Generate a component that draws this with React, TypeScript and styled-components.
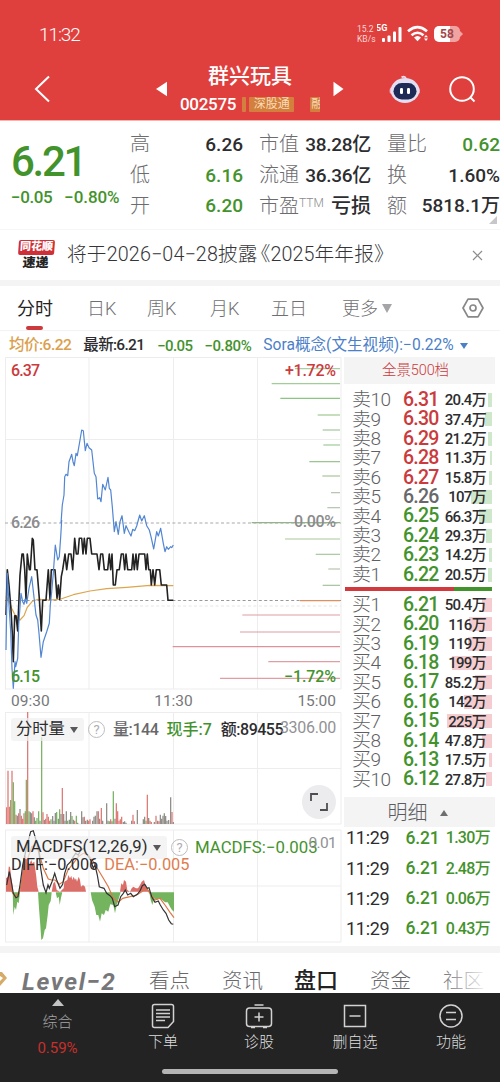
import React from "react";
import styled, { createGlobalStyle } from "styled-components";

const GREEN = "#43932d";
const RED = "#cb3a3c";
const INK = "#2d2d2f";
const MUTE = "#8b8b8d";

const Global = createGlobalStyle`
  * { box-sizing: border-box; }
  body { margin: 0; background: #fff; font-family: Roboto, "Noto Sans CJK SC", sans-serif; color: ${INK}; }
`;

interface TxtProps { $s: number; $w?: number; $c?: string; $ls?: number; $ml?: number }
const Txt = styled.span<TxtProps>`
  font-size: ${(p) => p.$s}px;
  font-weight: ${(p) => p.$w ?? 400};
  color: ${(p) => p.$c ?? INK};
  letter-spacing: ${(p) => p.$ls ?? 0}px;
  margin-left: ${(p) => p.$ml ?? 0}px;
  line-height: 1;
  white-space: nowrap;
`;

const Page = styled.div`width: 500px; height: 1082px; overflow: hidden; display: flex; flex-direction: column;`;

/* Header */
const Header = styled.header`height: 121px; background: #df403e; border-bottom: 1px solid #f7b4ae; flex: none;`;
const Status = styled.div`height: 58px; padding: 10px 38px 0 39px; display: flex; align-items: center; justify-content: space-between;`;
const StatusRight = styled.div`display: flex; align-items: center; height: 20px;`;
const Rate = styled.div`display: flex; flex-direction: column; gap: 2px; width: 20px;`;
const Battery = styled.div`
  width: 26px; height: 16px; border-radius: 5px; margin-left: 3px; margin-right: 2px; position: relative;
  background: linear-gradient(90deg, #fff 60%, #f0a3a1 60%);
  display: flex; align-items: center; justify-content: center;
  &::after { content: ""; position: absolute; left: 26px; top: 5px; border-left: 3px solid #f0a3a1; border-top: 3px solid transparent; border-bottom: 3px solid transparent; }
`;
const TitleBar = styled.div`height: 62px; display: grid; grid-template-columns: 154px 195px 151px; align-items: center;`;
const BackCell = styled.div`padding: 0 0 1px 34px; display: flex;`;
const TitleCell = styled.div`display: grid; grid-template-columns: 26px 140px 1fr; align-items: center; height: 62px;`;
const TitleText = styled.div`display: flex; flex-direction: column; align-items: center; padding-top: 1px;`;
const CodeRow = styled.div`display: flex; align-items: center; width: 140px; height: 17px; margin-top: 9px; overflow: hidden;`;
const Tag = styled.span<{ $w: number; $ml: number }>`
  width: ${(p) => p.$w}px; margin-left: ${(p) => p.$ml}px; height: 15px; flex: none; background: #d3803f; color: #f8dcb4;
  font-size: 12px; line-height: 15px; text-align: center; overflow: hidden; white-space: nowrap; border-radius: 1px;
`;
const HeadIcons = styled.div`display: flex; align-items: center; padding: 0 0 0 39px; gap: 26px;`;

/* Quote summary */
const Quote = styled.section`height: 108px; flex: none; display: grid; grid-template-columns: 130px 113px 128px 129px; padding-top: 8px;`;
const Last = styled.div`padding: 12px 0 0 11px; display: flex; flex-direction: column;`;
const LastChange = styled.div`display: flex; gap: 12px; margin-top: 6px;`;
const Stats = styled.div<{ $pl: number }>`padding-left: ${(p) => p.$pl}px; display: flex; flex-direction: column; position: relative;`;
const Stat = styled.div`height: 30.7px; display: flex; align-items: center; justify-content: space-between; white-space: nowrap;`;
const Sup = styled.sup`font-size: 12px; font-weight: 300; color: ${MUTE}; vertical-align: 6px; line-height: 0;`;
const Corner = styled.i`position: absolute; right: 3px; bottom: 5px; border-left: 8px solid transparent; border-bottom: 8px solid #c7c7c9;`;

/* News strip */
const News = styled.section`height: 51px; flex: none; border-top: 1px solid #f6f6f6; display: flex; align-items: center; padding: 0 16px 0 17px;`;
const Brand = styled.div`width: 38px; display: flex; flex-direction: column; align-items: center; transform: skewX(-4deg);`;
const BrandTop = styled.span`width: 36px; height: 15px; background: #cf3038; border-radius: 2px; color: #fff; font-size: 11px; font-weight: 900; line-height: 14px; text-align: center;`;
const BrandBottom = styled.span`font-size: 13px; font-weight: 900; line-height: 15px; color: #242424;`;
const NewsText = styled.div`flex: 1; padding-left: 12px; white-space: nowrap;`;
const Gap = styled.div<{ $h: number }>`height: ${(p) => p.$h}px; background: #f4f4f4; flex: none;`;

/* Chart tabs */
const Tabs = styled.nav`height: 45px; flex: none; display: flex; padding: 0 16px 0 17px; align-items: center; border-bottom: 1px solid #f3f3f3;`;
const Tab = styled.span<{ $on?: boolean; $w: number }>`
  width: ${(p) => p.$w}px; height: 44px; line-height: 45px; font-size: 18px; white-space: nowrap; position: relative;
  font-weight: ${(p) => (p.$on ? 400 : 300)}; color: ${(p) => (p.$on ? "#232325" : "#6f6f72")};
  ${(p) => p.$on && `&::after { content: ""; position: absolute; left: 9px; bottom: 0; width: 17px; height: 4px; border-radius: 2px; background: ${RED}; }`}
`;
const Caret = styled.i<{ $c: string; $s: number; $up?: boolean; $h?: number }>`
  display: inline-block; flex: none; border-left: ${(p) => p.$s}px solid transparent; border-right: ${(p) => p.$s}px solid transparent;
  ${(p) => (p.$up ? "border-bottom" : "border-top")}: ${(p) => p.$h ?? p.$s * 1.5}px solid ${(p) => p.$c};
`;
const Push = styled.div<{ $ml?: number }>`margin-left: ${(p) => (p.$ml ? `${p.$ml}px` : "auto")}; display: flex;`;
const Info = styled.div`height: 26px; flex: none; display: flex; align-items: center; padding: 4px 0 0 9px;`;

/* Market body */
const Body = styled.main`height: 589px; flex: none; display: grid; grid-template-columns: 344px 151px;`;
const Charts = styled.div`display: flex; flex-direction: column;`;
const Times = styled.div`height: 22px; display: grid; grid-template-columns: 1fr 1fr 1fr; align-items: center; padding: 2px 8px 0 11px;
  & > :nth-child(2) { text-align: center; } & > :nth-child(3) { text-align: right; }`;
const SubPanel = styled.div`height: 117px; position: relative;`;
const Over = styled.div<{ $t: number }>`position: absolute; left: 11px; right: 0; top: ${(p) => p.$t}px; height: 23px; display: flex; align-items: center;`;
const Picker = styled.div<{ $w: number }>`width: ${(p) => p.$w}px; height: 23px; background: rgba(240,240,240,.72); border-radius: 3px; display: flex; align-items: center; justify-content: space-between; padding: 0 6px 0 5px; flex: none;`;
const Help = styled.span`width: 17px; height: 17px; border: 1.3px solid #bdbdbf; border-radius: 50%; color: #adadaf; font-size: 13px; line-height: 15px; text-align: center; flex: none; margin-left: 4px;`;
const AxisMax = styled.div<{ $t: number }>`position: absolute; right: 8px; top: ${(p) => p.$t}px; display: flex;`;
const Expand = styled.div`position: absolute; left: 302px; top: 73px; width: 34px; height: 34px; border-radius: 50%; background: #ececee; display: flex; align-items: center; justify-content: center;`;

const Book = styled.aside`display: flex; flex-direction: column;`;
const BookTop = styled.div`height: 27px; background: #f4f4f5; display: flex; align-items: center; justify-content: center; margin-bottom: 6px; flex: none; padding: 2px 8px 0 0;`;
const Level = styled.div`height: 19.4px; flex: none; display: grid; grid-template-columns: 51px 43px 40px; padding-left: 8px; align-items: center; position: relative;`;
const Depth = styled.i`position: absolute; right: 3px; top: 3px; height: 14px;`;
const Vol = styled.div`position: relative; line-height: 1; display: flex; justify-content: flex-end; align-items: center; padding-top: 2px;`;
const Ratio = styled.div`height: 4px; margin: 3px 3px 4px 1px; background: linear-gradient(90deg, #d2393d 74%, #43932d 74%); flex: none;`;
const DetailHead = styled.div`height: 30px; margin-top: 8px; background: #f4f4f5; display: flex; align-items: center; justify-content: center; gap: 12px; flex: none; padding: 3px 4px 0 0;`;
const Trade = styled.div`height: 30.2px; flex: none; display: flex; align-items: center; justify-content: space-between; padding: 0 5px 7px 2px;`;

/* Lower tabs and nav */
const Lower = styled.div`height: 40px; flex: none; display: flex; padding-top: 14px; position: relative; overflow: hidden;`;
const LowTab = styled.span<{ $w: number; $on?: boolean }>`
  width: ${(p) => p.$w}px; flex: none; line-height: 28px; white-space: nowrap;
  font-size: ${(p) => (p.$on ? 22 : 20.5)}px; font-weight: ${(p) => (p.$on ? 500 : 300)}; color: ${(p) => (p.$on ? "#222" : "#69696c")};
`;
const LevelTwo = styled.span`width: 128px; flex: none; font: italic 700 24.5px/29px Roboto, sans-serif; letter-spacing: 1.6px; color: #77777a; padding-left: 1px;`;
const Fade = styled.i`position: absolute; right: 0; top: 0; width: 62px; height: 40px; background: linear-gradient(90deg, rgba(255,255,255,0), #fff 85%);`;
const Nav = styled.footer`height: 89px; flex: none; background: #232323; display: flex; flex-direction: column; align-items: center;`;
const NavGrid = styled.div`height: 76px; width: 500px; display: grid; grid-template-columns: 115px repeat(4, 96px);`;
const NavItem = styled.div`display: flex; flex-direction: column; align-items: center; padding-top: 9px; gap: 5px;`;
const IndexItem = styled.div`display: flex; flex-direction: column; align-items: center; padding-top: 6px;
  & > :nth-child(2) { margin-top: 9px; } & > :nth-child(3) { margin-top: 11px; }`;
const HomeBar = styled.div`width: 176px; height: 5px; border-radius: 3px; background: #b4b4b4;`;

const line = (pts: number[][], y0: number) => pts.map(([x, y]) => `${(x / 3).toFixed(1)},${(y0 + y / 3).toFixed(1)}`).join(" ");

const blueA = [[18,555],[22,325],[27,420],[32,500],[36,610],[40,670],[45,590],[47,605],[53,580],[56,480],[63,385],[68,410],[72,418],[75,402],[80,415],[87,370],[95,335],[103,405],[108,450],[113,465],[117,505],[123,577],[130,530],[140,500],[148,475],[151,420],[155,380],[160,325],[166,240],[173,285],[178,275],[182,215],[185,165]];
const blueB = [[183,505],[187,450],[192,420],[194,365],[198,358],[203,362],[207,320],[215,298],[219,320],[223,332],[228,295],[232,302],[240,255],[245,225],[250,227],[256,287],[261,265],[267,278],[275,285],[283,355],[288,365],[293,432],[299,428],[303,440],[308,388],[316,405],[324,367],[328,400],[332,405],[337,455],[343,530],[348,500],[355,538],[360,500],[366,482],[373,535],[378,512],[388,533],[393,543],[398,523],[404,527],[410,513],[419,480],[425,498],[433,482],[440,512],[448,525],[453,545],[461,582],[470,530],[475,543],[482,520],[490,565],[495,590],[500,575],[505,583],[512,575],[515,578],[520,570]];
const black = [[18,285],[22,149],[27,195],[33,270],[37,340],[40,425],[44,287],[48,287],[53,333],[57,235],[60,165],[66,102],[70,102],[74,149],[78,238],[82,102],[88,149],[91,149],[97,55],[100,60],[105,149],[111,149],[118,235],[124,333],[128,241],[138,241],[145,149],[150,238],[154,149],[165,149],[171,235],[175,195],[179,238],[184,170],[188,149],[195,102],[200,149],[206,102],[213,102],[218,149],[224,55],[229,102],[234,102],[238,55],[245,55],[249,102],[253,55],[258,102],[262,55],[270,55],[275,102],[291,102],[297,149],[302,102],[308,102],[313,149],[323,149],[328,102],[332,149],[336,102],[340,195],[346,195],[351,149],[358,149],[364,102],[370,102],[374,149],[378,102],[383,149],[395,149],[399,102],[403,149],[408,102],[412,149],[417,102],[434,102],[438,149],[442,102],[446,149],[451,149],[454,195],[459,149],[464,195],[469,149],[479,149],[484,195],[500,195],[504,241],[520,241]];
const avg = [[18,230],[28,245],[35,265],[45,285],[60,300],[72,287],[82,262],[97,244],[115,238],[150,240],[180,238],[220,224],[270,213],[320,206],[380,202],[450,196],[520,197]];
const bars: [number, number, string][] = [[41,375,"#a9cfa0"],[86,305,"#9fcf97"],[130,331,"#8cc484"],[180,443,"#9bca93"],[225,458,"#a5c79d"],[270,460,"#9fcb97"],[320,418,"#94c28c"],[363,457,"#abc59c"],[413,483,"#b3c3ae"],[458,472,"#b3c3ae"],[503,245,"#93b38b"],[552,345,"#a7c998"],[598,437,"#a7c79f"],[642,475,"#b4c6ae"],[691,458,"#a3c39c"],[737,390,"#e0905f"],[780,217,"#df9ea3"],[831,210,"#df9ea3"],[875,8,"#dd9298"],[920,295,"#df9ea3"],[970,150,"#df9ea3"]];

const Grid = ({ ys }: { ys: number[] }) => (
  <g stroke="#ededee" strokeWidth="1">
    {[5.5, 89, 173.5, 257.5, 341].map((x) => <line key={x} x1={x} x2={x} y1={ys[0]} y2={ys[ys.length - 1]} />)}
    {ys.map((y) => <line key={y} x1="5" x2="341" y1={y} y2={y} />)}
  </g>
);

const Svg = styled.svg`display: block;`;

const PriceChart = () => (
  <Svg width="343" height="333" viewBox="0 357 343 333" fontFamily="Roboto" fontSize="16" fontWeight="500">
    <Grid ys={[357.5, 439.5, 689]} />
    <g strokeDasharray="3 2.4">
      <line x1="5" x2="341" y1="523" y2="523" stroke="#a8a8aa" />
      <line x1="5" x2="341" y1="600.5" y2="600.5" stroke="#98989c" />
      <line x1="5" x2="341" y1="606" y2="606" stroke="#e5e5e7" />
    </g>
    {bars.map(([y, x, c]) => <line key={y} x1={170 + x / 3} x2="340" y1={355 + y / 3} y2={355 + y / 3} stroke={c} strokeWidth="1.2" />)}
    <g fill="none" strokeLinejoin="round">
      <polyline points={line(avg, 520)} stroke="#dca64e" strokeWidth="1.2" />
      <polyline points={line(black, 520)} stroke="#222" strokeWidth="1.6" />
      <polyline points={line(blueA, 465)} stroke="#5286d3" strokeWidth="1.2" />
      <polyline points={line(blueB, 355)} stroke="#5286d3" strokeWidth="1.2" />
    </g>
    <text x="11" y="376" fill={RED} textLength="29">6.37</text>
    <text x="11" y="527.5" fill={MUTE} textLength="29">6.26</text>
    <text x="11" y="682" fill={GREEN} textLength="29">6.15</text>
    <text x="285" y="376" fill={RED} textLength="51">+1.72%</text>
    <text x="294" y="527" fill={MUTE} textLength="42">0.00%</text>
    <text x="284" y="682" fill={GREEN} textLength="52">−1.72%</text>
  </Svg>
);

const R = "#dd7772", G = "#78b262", K = "#8d8b86";
/* Minute volumes: x, height, colour, in thirds of a pixel */
const vols: [number, number, string][] = [
[20,50,R],[24,160,R],[28,52,R],[32,72,G],[36,160,R],[40,125,G],[44,68,G],[48,28,R],[52,25,K],[56,32,R],[60,45,K],[64,25,R],[68,16,R],[72,32,R],[76,38,G],[79,133,G],[83,340,R],[87,38,G],[91,35,K],[95,32,K],[99,38,R],[103,20,K],[107,10,G],[111,18,G],[116,38,G],[120,10,K],[125,260,G],[129,35,R],[133,12,K],[137,16,R],[141,30,R],[145,22,R],[149,10,R],[153,14,G],[158,24,K],[162,10,K],[166,33,K],[170,36,G],[175,16,K],[179,44,G],[183,30,K],[187,108,R],[191,30,K],[195,10,K],[199,38,K],[203,10,G],[208,13,K],[212,36,K],[216,24,G],[220,13,K],[224,10,R],[229,25,G],[233,4,K],[245,38,K],[249,20,K],[253,22,R],[257,10,K],[262,13,K],[266,10,R],[270,14,R],[278,10,K],[282,22,K],[286,25,K],[291,38,K],[295,38,R],[299,16,K],[304,48,R],[308,10,K],[320,62,K],[324,10,K],[328,8,G],[332,14,R],[336,8,K],[340,98,G],[345,16,K],[349,62,R],[353,38,R],[357,10,R],[361,14,R],[365,22,R],[370,6,K],[374,8,K],[378,4,K],[395,10,K],[399,28,R],[403,8,R],[412,42,K],[430,14,K],[434,22,K],[438,10,G],[442,88,R],[446,18,K],[450,10,R],[454,6,R],[463,6,K],[468,25,R],[473,10,K],[477,8,R],[481,28,K],[485,16,K],[489,25,K],[493,32,K],[497,24,K],[501,10,K],[506,12,K],[512,80,K],[516,36,R],[520,6,K]];
const VolumeChart = () => (
  <Svg width="343" height="117" viewBox="0 712 343 117">
    <Grid ys={[712.5, 768.5, 824]} />
    {vols.map(([x, h, c]) => <line key={x} x1={x / 3} x2={x / 3} y1={824 - h / 3} y2="824" stroke={c} strokeWidth="1.25" />)}
  </Svg>
);

const macdUp = [[18,200],[18,160],[24,155],[26,125],[30,125],[33,150],[38,185],[40,200],[60,200],[64,160],[70,115],[74,90],[78,95],[82,110],[88,118],[94,105],[97,115],[103,110],[109,155],[112,185],[116,200],[155,200],[160,175],[165,170],[170,195],[180,200],[191,190],[193,170],[202,165],[205,150],[210,160],[214,152],[217,165],[221,155],[225,165],[228,160],[231,170],[236,155],[240,165],[243,185],[249,180],[255,185],[258,200],[360,200],[364,175],[369,180],[372,165],[378,170],[382,195],[390,200],[395,190],[400,185],[408,190],[414,190],[420,180],[425,170],[432,165],[438,185],[445,195],[450,200]];
const macdDown = [[38,202],[40,270],[44,245],[48,255],[52,230],[56,235],[60,202],[114,202],[117,250],[121,300],[124,345],[129,340],[134,315],[138,310],[143,270],[146,240],[152,228],[155,202],[167,202],[171,220],[176,215],[179,240],[183,218],[187,202],[272,202],[276,225],[284,245],[289,270],[295,270],[300,290],[305,265],[312,270],[317,255],[325,260],[331,238],[340,240],[345,265],[350,240],[355,225],[362,202],[448,202],[452,225],[457,240],[463,220],[470,225],[478,220],[487,225],[495,232],[503,232],[510,245],[516,255],[522,260],[522,202]];
const diff = [[20,180],[28,140],[33,165],[40,205],[48,218],[54,215],[60,180],[68,120],[80,65],[92,20],[100,17],[108,45],[116,75],[122,130],[130,180],[138,203],[144,180],[148,190],[156,170],[164,145],[170,165],[180,190],[188,178],[194,145],[202,120],[212,110],[220,95],[227,85],[235,90],[242,75],[252,70],[262,90],[272,105],[280,130],[285,120],[292,150],[298,185],[305,188],[312,190],[320,205],[330,212],[337,220],[344,245],[354,240],[362,215],[370,205],[376,195],[383,210],[392,205],[400,215],[412,208],[420,198],[427,182],[434,178],[442,190],[447,188],[455,215],[465,232],[475,228],[481,240],[490,255],[498,265],[506,285],[514,296],[520,298]];
const dea = [[20,175],[30,190],[45,215],[56,205],[68,170],[80,110],[95,65],[106,60],[118,85],[130,130],[145,162],[155,165],[165,165],[178,178],[190,170],[204,135],[220,115],[235,95],[250,85],[265,90],[280,110],[295,135],[310,160],[325,185],[340,220],[355,232],[368,220],[390,215],[410,210],[425,200],[440,190],[450,205],[465,225],[480,220],[495,240],[510,262],[522,278]];
const MacdChart = () => (
  <Svg width="343" height="117" viewBox="0 829 343 117">
    <Grid ys={[830, 886, 942]} />
    <polygon points={line(macdUp, 825)} fill="#db6e69" />
    <polygon points={line(macdDown, 825)} fill="#74b45e" />
    <g fill="none" strokeWidth="1.2">
      <polyline points={line(dea, 825)} stroke="#dc7848" />
      <polyline points={line(diff, 825)} stroke="#333" />
    </g>
  </Svg>
);

const sells: [number, string, string][] = [[10,"6.31","20.4"],[9,"6.30","37.4"],[8,"6.29","21.2"],[7,"6.28","11.3"],[6,"6.27","15.8"],[5,"6.26","107"],[4,"6.25","66.3"],[3,"6.24","29.3"],[2,"6.23","14.2"],[1,"6.22","20.5"]];
const buys: [number, string, string][] = [[1,"6.21","50.4"],[2,"6.20","116"],[3,"6.19","119"],[4,"6.18","199"],[5,"6.17","85.2"],[6,"6.16","142"],[7,"6.15","225"],[8,"6.14","47.8"],[9,"6.13","17.5"],[10,"6.12","27.8"]];

const BookRow = ({ side, n, price, vol }: { side: string; n: number; price: string; vol: string }) => (
  <Level>
    <Depth style={{ width: Math.max(2, Number(vol) * 0.2), background: side === "卖" ? "#cfe8cb" : "#f5cdd1" }} />
    <Txt $s={19} $w={300} $c="#606063" $ls={-0.5}>{side}{n}</Txt>
    <Txt $s={19.5} $w={500} $ls={-0.8} $c={+price > 6.26 ? RED : +price < 6.26 ? GREEN : "#68686b"}>{price}</Txt>
    <Vol><Txt $s={15} $w={500} $ls={-0.7}>{vol}万</Txt></Vol>
  </Level>
);

const Icon = ({ children }: { children: React.ReactNode }) => (
  <svg width="28" height="28" viewBox="0 0 28 28" fill="none" stroke="#d2d2d2" strokeWidth="1.5">{children}</svg>
);

export default function App() {
  return (
    <Page>
      <Global />
      <Header>
        <Status>
          <Txt $s={19} $w={300} $c="#fff" $ls={-1.1}>11:32</Txt>
          <StatusRight>
            <Rate><Txt $s={8.5} $c="#fbd5d3">15.2</Txt><Txt $s={8.5} $c="#fbd5d3">KB/s</Txt></Rate>
            <svg width="54" height="20" viewBox="0 0 54 20" fill="#fff">
              <text x="-1" y="7" fontSize="9" fontWeight="700" fontFamily="Roboto">5G</text>
              <rect x="5" y="14" width="3" height="4" rx="1" /><rect x="10.5" y="11.5" width="3" height="6.500" rx="1" /><rect x="16" y="7.500" width="3" height="10.500" rx="1" /><rect x="21.500" y="3" width="3" height="15" rx="1" />
              <g fill="none" stroke="#fff" strokeWidth="2.600"><path d="M31 7.200Q40.500 -1 50 7.200" /><path d="M34.500 11.300Q40.500 6.200 46.500 11.300" /></g>
              <path d="M37 13.500Q40.500 10.500 44 13.500L40.500 17.200Z" /><path d="M47 13.200l2-2.300 2 2.300zM47 14.600l2 2.300 2-2.300z" />
            </svg>
            <Battery><Txt $s={12} $w={700} $c="#a4474a">58</Txt></Battery>
          </StatusRight>
        </Status>
        <TitleBar>
          <BackCell><svg width="18" height="28" viewBox="0 0 18 28" fill="none" stroke="#fff" strokeWidth="2"><path d="M15 1.500 2 14 15 26.500" /></svg></BackCell>
          <TitleCell>
            <svg width="14" height="16" viewBox="0 0 14 16" fill="#fff"><path d="M2 8 13 .8V15.200Z" /></svg>
            <TitleText>
              <Txt $s={21} $w={500} $c="#fff">群兴玩具</Txt>
              <CodeRow><Txt $s={17} $w={500} $c="#fff" $ls={-0.3}>002575</Txt><Tag $w={4} $ml={6} /><Tag $w={45} $ml={3}>深股通</Tag><Tag $w={14} $ml={16}>融</Tag></CodeRow>
            </TitleText>
            <svg width="24" height="16" viewBox="-12 0 24 16" fill="#fff"><path d="M11.500 8 1.500 .8V15.200Z" /></svg>
          </TitleCell>
          <HeadIcons>
            <svg width="34" height="30" viewBox="0 0 34 30">
              <path d="M13.500 3.200Q18 1.500 18 6" fill="none" stroke="#f4d9e6" strokeWidth="1.800" />
              <path d="M3.500 13Q1 14 1.800 19L5 21M30 13q2.500 1 1.800 6L29 21" fill="#f4b4c4" />
              <ellipse cx="17" cy="16.500" rx="14.300" ry="12.500" fill="#e4def2" />
              <rect x="5.500" y="9" width="23" height="16.500" rx="8.200" fill="#1c2a55" />
              <rect x="12" y="14" width="3" height="6" rx="1.200" fill="#fff" /><rect x="19" y="14" width="3" height="6" rx="1.200" fill="#fff" />
            </svg>
            <svg width="28" height="28" viewBox="0 0 28 28" fill="none" stroke="#fff" strokeWidth="2"><circle cx="14" cy="14" r="11.800" /><path d="M22 22 26.500 26.500" /></svg>
          </HeadIcons>
        </TitleBar>
      </Header>

      <Quote>
        <Last>
          <Txt $s={42} $w={500} $c={GREEN} $ls={-2.3}>6.21</Txt>
          <LastChange><Txt $s={17} $w={500} $c={GREEN} $ls={-0.4}>−0.05</Txt><Txt $s={17} $w={500} $c={GREEN} $ls={-0.1}>−0.80%</Txt></LastChange>
        </Last>
        <Stats $pl={0}>
          {[["高", "6.26", INK], ["低", "6.16", GREEN], ["开", "6.20", GREEN]].map(([k, v, c]) => (
            <Stat key={k}><Txt $s={20} $w={300} $c="#6c6c6f">{k}</Txt><Txt $s={19} $w={500} $c={c}>{v}</Txt></Stat>
          ))}
        </Stats>
        <Stats $pl={16}>
          <Stat><Txt $s={20} $w={300} $c="#6c6c6f">市值</Txt><Txt $s={19} $w={500} $ls={-0.3}>38.28亿</Txt></Stat>
          <Stat><Txt $s={20} $w={300} $c="#6c6c6f">流通</Txt><Txt $s={19} $w={500} $ls={-0.3}>36.36亿</Txt></Stat>
          <Stat><Txt $s={20} $w={300} $c="#6c6c6f">市盈<Sup>TTM</Sup></Txt><Txt $s={20} $w={500}>亏损</Txt></Stat>
        </Stats>
        <Stats $pl={16}>
          <Stat><Txt $s={20} $w={300} $c="#6c6c6f">量比</Txt><Txt $s={19} $w={500} $c={GREEN}>0.62</Txt></Stat>
          <Stat><Txt $s={20} $w={300} $c="#6c6c6f">换</Txt><Txt $s={19} $w={500}>1.60%</Txt></Stat>
          <Stat><Txt $s={20} $w={300} $c="#6c6c6f">额</Txt><Txt $s={19} $w={500}>5818.1万</Txt></Stat>
          <Corner />
        </Stats>
      </Quote>

      <News>
        <Brand><BrandTop>同花顺</BrandTop><BrandBottom>速递</BrandBottom></Brand>
        <NewsText><Txt $s={19.7} $w={300} $c="#353537" $ls={0.15}>将于2026−04−28披露</Txt><Txt $s={19.7} $w={300} $c="#353537" $ml={-7} $ls={0.1}>《2025年年报》</Txt></NewsText>
        <svg width="13" height="13" viewBox="0 0 13 13" stroke="#8d8d90" strokeWidth="1.2"><path d="M2 2 11 11M11 2 2 11" /></svg>
      </News>
      <Gap $h={6} />

      <Tabs>
        <Tab $on $w={70}>分时</Tab><Tab $w={60}>日K</Tab><Tab $w={63}>周K</Tab><Tab $w={61}>月K</Tab><Tab $w={71}>五日</Tab><Tab $w={40}>更多</Tab>
        <Caret $c="#a5a5a8" $s={5} $h={9} />
        <Push><svg width="22" height="20" viewBox="0 0 22 20" fill="none" stroke="#88888b" strokeWidth="1.700"><path d="M6 1.200H16L21 10 16 18.800H6L1 10Z" strokeLinejoin="round" /><circle cx="11" cy="10" r="3" /></svg></Push>
      </Tabs>
      <Info>
        <Txt $s={15.5} $w={500} $c="#dba04d" $ls={-0.5}>均价:6.22</Txt>
        <Txt $s={15.5} $w={500} $ls={-0.7} $ml={12}>最新:6.21</Txt>
        <Txt $s={15} $w={500} $c={GREEN} $ls={-0.6} $ml={13}>−0.05</Txt>
        <Txt $s={15} $w={500} $c={GREEN} $ls={-0.4} $ml={12}>−0.80%</Txt>
        <Txt $s={15.6} $c="#4b7fc8" $ml={12}>Sora概念(文生视频):−0.22%</Txt>
        <Push $ml={6}><Caret $c="#4b7fc8" $s={4} /></Push>
      </Info>

      <Body>
        <Charts>
          <PriceChart />
          <Times><Txt $s={15.5} $c="#77777a">09:30</Txt><Txt $s={15.5} $c="#77777a">11:30</Txt><Txt $s={15.5} $c="#77777a">15:00</Txt></Times>
          <SubPanel>
            <VolumeChart />
            <Over $t={6}>
              <Picker $w={73}><Txt $s={16.3}>分时量</Txt><Caret $c="#59595c" $s={4} /></Picker><Help>?</Help>
              <Txt $s={16} $w={500} $c="#68686b" $ml={8} $ls={-0.4}>量:144</Txt>
              <Txt $s={16} $w={500} $c={GREEN} $ml={8}>现手:7</Txt>
              <Txt $s={16} $w={500} $ml={9} $ls={-0.5}>额:89455</Txt>
            </Over>
            <AxisMax $t={8}><Txt $s={16} $c="#929295" $ls={-0.3}>3306.00</Txt></AxisMax>
            <Expand><svg width="18" height="18" viewBox="0 0 18 18" fill="none" stroke="#4e4e52" strokeWidth="1.8"><path d="M1 8V1H8M17 10V17H10" /></svg></Expand>
          </SubPanel>
          <SubPanel>
            <MacdChart />
            <Over $t={7}>
              <Picker $w={156}><Txt $s={16.7}>MACDFS(12,26,9)</Txt><Caret $c="#59595c" $s={4} /></Picker><Help>?</Help>
              <Txt $s={16.8} $c={GREEN} $ml={7}>MACDFS:−0.003</Txt>
            </Over>
            <Over $t={25}><Txt $s={16.3}>DIFF:−0.006</Txt><Txt $s={16.4} $c="#e07d50" $ml={6}>DEA:−0.005</Txt></Over>
            <AxisMax $t={7}><Txt $s={15.5} $c="#929295" $ls={-0.7}>0.01</Txt></AxisMax>
          </SubPanel>
        </Charts>
        <Book>
          <BookTop><Txt $s={14.5} $w={300} $c={RED} $ls={-0.1}>全景500档</Txt></BookTop>
          {sells.map(([n, p, v]) => <BookRow key={n} side="卖" n={n} price={p} vol={v} />)}
          <Ratio />
          {buys.map(([n, p, v]) => <BookRow key={n} side="买" n={n} price={p} vol={v} />)}
          <DetailHead><Txt $s={20} $w={300} $c="#5c5c5f">明细</Txt><Caret $up $c="#6e6e71" $s={4} /></DetailHead>
          {["1.30", "2.48", "0.06", "0.43"].map((v) => (
            <Trade key={v}><Txt $s={18} $ls={-0.3}>11:29</Txt><Txt $s={17.5} $w={500} $c={GREEN} $ml={10} $ls={-0.2}>6.21</Txt><Txt $s={16} $w={500} $c={GREEN} $ls={-0.7}>{v}万</Txt></Trade>
          ))}
        </Book>
      </Body>
      <Gap $h={7} />
      <Lower>
        <svg width="21" height="28" viewBox="0 0 21 28"><path d="M0 5H2L7 11 0 19V14L3 11 0 9Z" fill="#d6aa68" /></svg>
        <LevelTwo>Level−2</LevelTwo>
        <LowTab $w={73}>看点</LowTab><LowTab $w={72}>资讯</LowTab><LowTab $w={76} $on>盘口</LowTab><LowTab $w={73}>资金</LowTab><LowTab $w={50}>社区</LowTab>
        <Fade />
      </Lower>
      <Nav>
        <NavGrid>
          <IndexItem><Caret $up $c="#c4c4c4" $s={6} $h={7} /><Txt $s={15} $w={300} $c="#a5a5a5">综合</Txt><Txt $s={15} $c="#c92f2b">0.59%</Txt></IndexItem>
          <NavItem><Icon><path d="M5.500 2.500H22.500Q24.500 2.500 24.500 4.500V19.500L19 25.500H5.500Q3.500 25.500 3.500 23.500V4.500Q3.500 2.500 5.500 2.500ZM7 8H21M7 11.500H21M7 15H21M7 18.500H16" /></Icon><Txt $s={15} $w={300} $c="#dedede">下单</Txt></NavItem>
          <NavItem><Icon><rect x="1.500" y="6" width="25" height="18.500" rx="3" /><path d="M9.500 3H18.500M14 10.500V19.500M9.500 15H18.500M6 25.500H10M18 25.500H22" /></Icon><Txt $s={15} $w={300} $c="#dedede">诊股</Txt></NavItem>
          <NavItem><Icon><rect x="3.500" y="3.500" width="21" height="21" /><path d="M8.500 14H19.500" /></Icon><Txt $s={15} $w={300} $c="#dedede">删自选</Txt></NavItem>
          <NavItem><Icon><circle cx="14" cy="14" r="11" /><path d="M9 10.500H19M9 17.500H19" /></Icon><Txt $s={15} $w={300} $c="#dedede">功能</Txt></NavItem>
        </NavGrid>
        <HomeBar />
      </Nav>
    </Page>
  );
}
